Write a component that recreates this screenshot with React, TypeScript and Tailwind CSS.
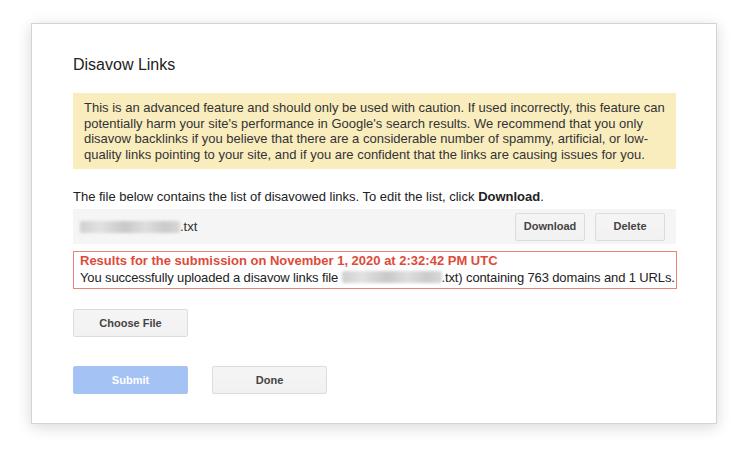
import React from 'react';

// Blurred-out file name placeholder
const Redacted: React.FC<{ width: number }> = ({ width }) => (
  <span
    className="inline-block h-[12px] align-[-1px] rounded-[2px] bg-[linear-gradient(90deg,#cfcfcf,#e2e2e2_20%,#c8c8c8_45%,#dedede_65%,#cacaca_85%,#d8d8d8)] blur-[1.5px]"
    style={{ width }}
  />
);

const GButton: React.FC<{ label: string; className?: string }> = ({ label, className = '' }) => (
  <button
    className={`h-[28px] rounded-[2px] border border-[#dcdcdc] bg-[linear-gradient(#f5f5f5,#f1f1f1)] text-[11px] font-bold text-[#444] ${className}`}
  >
    {label}
  </button>
);

const App: React.FC = () => {
  return (
    <div className="w-[750px] h-[461px] bg-white pt-[23px] pl-[31px] font-['Liberation_Sans',Arial,sans-serif] text-[13px] text-[#222]">
      <div className="w-[686px] h-[401px] border border-[#d3d3d3] bg-white shadow-[0_3px_14px_rgba(0,0,0,0.16)] pl-[41px] pr-[40px] pt-[31px]">
        <h1 className="text-[16px] leading-[20px] text-[#222]">Disavow Links</h1>

        <div className="mt-[18px] bg-[#f9edbe] px-[11px] py-[7px] leading-[15.5px] text-[#333]">
          This is an advanced feature and should only be used with caution. If used incorrectly, this feature can
          potentially harm your site's performance in Google's search results. We recommend that you only disavow
          backlinks if you believe that there are a considerable number of spammy, artificial, or low-quality links
          pointing to your site, and if you are confident that the links are causing issues for you.
        </div>

        <p className="mt-[20px] leading-[15px]">
          The file below contains the list of disavowed links. To edit the list, click <b>Download</b>.
        </p>

        <div className="mt-[5px] h-[35px] bg-[#f5f5f5] flex items-center pl-[7px] pr-[11px]">
          <span className="flex-1 flex items-center text-[#333]">
            <Redacted width={100} />
            <span>.txt</span>
          </span>
          <GButton label="Download" className="w-[70px]" />
          <GButton label="Delete" className="w-[70px] ml-[10px]" />
        </div>

        <div className="mt-[7px] w-[604px] border border-[#e8857a] px-[6px] pt-[1px] pb-[2px] leading-[16.5px]">
          <div className="font-bold text-[#dd4b39]">Results for the submission on November 1, 2020 at 2:32:42 PM UTC</div>
          <div className="whitespace-nowrap tracking-[-0.13px]">
            You successfully uploaded a disavow links file <Redacted width={100} />.txt) containing 763 domains and 1 URLs.
          </div>
        </div>

        <GButton label="Choose File" className="mt-[20px] block w-[115px] h-[28px] text-[#333]" />

        <div className="mt-[29px] flex gap-[24px]">
          <button className="h-[28px] w-[115px] rounded-[2px] border border-[#a9c5f5] bg-[#a4c2f4] text-[11px] font-bold text-white">
            Submit
          </button>
          <GButton label="Done" className="w-[115px] text-[#333]" />
        </div>
      </div>
    </div>
  );
};

export default App;
